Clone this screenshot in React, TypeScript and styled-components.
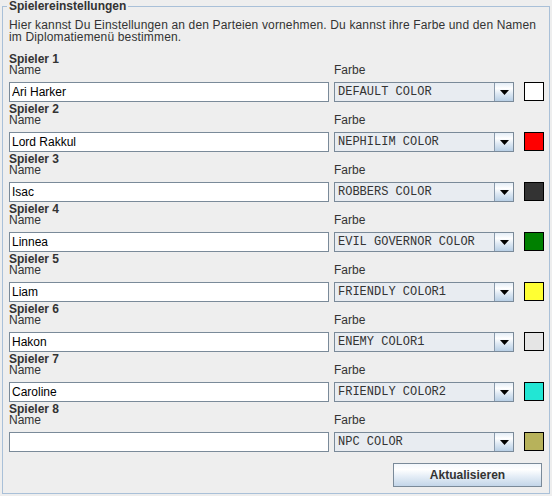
import React from "react";
import styled, { createGlobalStyle } from "styled-components";

const GlobalStyle = createGlobalStyle`
  html, body {
    margin: 0;
    padding: 0;
    background: #eeeeee;
  }
  body {
    font-family: "Liberation Sans", Arial, sans-serif;
    font-size: 12px;
    color: #333333;
  }
  * { box-sizing: border-box; }
`;

const Page = styled.div`
  width: 552px;
  height: 496px;
  padding: 0 2px 2px 2px;
  background: #eeeeee;
`;

const Group = styled.fieldset`
  margin: 0;
  min-width: 0;
  height: 494px;
  border: 1px solid #a9c0d8;
  padding: 7px 5px 6px 6px;
`;

const Title = styled.legend`
  margin-left: -2px;
  padding: 0 2px;
  font-weight: bold;
  font-size: 12px;
  line-height: 12px;
  color: #333333;
`;

const Description = styled.p`
  margin: 0 0 11px 0;
  line-height: 12px;
  letter-spacing: 0.15px;
  color: #333333;
`;

const PlayerBlock = styled.div`
  display: flex;
  flex-direction: column;
  height: 50px;
`;

const PlayerTitle = styled.div`
  font-weight: bold;
  line-height: 11px;
  height: 11px;
`;

const FieldsRow = styled.div`
  display: flex;
  align-items: flex-end;
`;

const FieldColumn = styled.div<{ $width: number; $offset: number }>`
  display: flex;
  flex-direction: column;
  width: ${(p) => p.$width}px;
  margin-left: ${(p) => p.$offset}px;
`;

const FieldLabel = styled.div`
  line-height: 11px;
  height: 11px;
  margin-bottom: 6px;
`;

const TextInput = styled.input`
  height: 20px;
  width: 100%;
  margin: 0;
  padding: 0 2px;
  border: 1px solid #7a8a99;
  background: #ffffff;
  font-family: "Liberation Sans", Arial, sans-serif;
  font-size: 12px;
  color: #000000;
  outline: none;
`;

const Combo = styled.div`
  display: flex;
  height: 20px;
  border: 1px solid #7a8a99;
  background: #e8ecf1;
`;

const ComboValue = styled.div`
  flex: 1;
  padding: 0 3px;
  font-family: "Liberation Mono", "Courier New", monospace;
  font-size: 12px;
  line-height: 18px;
  color: #333333;
  white-space: nowrap;
  overflow: hidden;
`;

const ComboArrow = styled.div`
  width: 19px;
  border-left: 1px solid #8a9aab;
  display: flex;
  align-items: center;
  justify-content: center;
  background: linear-gradient(
    to bottom,
    #e4edf6 0%,
    #ffffff 30%,
    #dde8f3 60%,
    #b8cfe5 100%
  );
`;

const Swatch = styled.div<{ $color: string }>`
  width: 20px;
  height: 19px;
  margin-left: 10px;
  margin-bottom: 1px;
  border: 1px solid #000000;
  background: ${(p) => p.$color};
`;

const Footer = styled.div`
  display: flex;
  justify-content: flex-end;
  margin-top: 9px;
  padding-right: 2px;
`;

const Button = styled.button`
  width: 149px;
  height: 24px;
  margin: 0;
  padding: 0;
  border: 1px solid #7a8a99;
  background: linear-gradient(
    to bottom,
    #f4f8fc 0%,
    #ffffff 25%,
    #e6eef7 55%,
    #c3d6e9 100%
  );
  font-family: "Liberation Sans", Arial, sans-serif;
  font-weight: bold;
  font-size: 12px;
  color: #333333;
`;

const ArrowIcon = () => (
  <svg width="9" height="5" viewBox="0 0 9 5">
    <path d="M0 0 H9 L4.5 5 Z" fill="#000" />
  </svg>
);

const players = [
  { name: "Ari Harker", color: "DEFAULT COLOR", swatch: "#ffffff" },
  { name: "Lord Rakkul", color: "NEPHILIM COLOR", swatch: "#ff0000" },
  { name: "Isac", color: "ROBBERS COLOR", swatch: "#333333" },
  { name: "Linnea", color: "EVIL GOVERNOR COLOR", swatch: "#008000" },
  { name: "Liam", color: "FRIENDLY COLOR1", swatch: "#ffff33" },
  { name: "Hakon", color: "ENEMY COLOR1", swatch: "#e5e5e5" },
  { name: "Caroline", color: "FRIENDLY COLOR2", swatch: "#22e6d4" },
  { name: "", color: "NPC COLOR", swatch: "#b7b25b" },
];

export default function App() {
  return (
    <>
      <GlobalStyle />
      <Page>
        <Group>
          <Title>Spielereinstellungen</Title>
          <Description>
            Hier kannst Du Einstellungen an den Parteien vornehmen. Du kannst ihre Farbe und den Namen
            <br />
            im Diplomatiemenü bestimmen.
          </Description>
          {players.map((p, i) => (
            <PlayerBlock key={i}>
              <PlayerTitle>Spieler {i + 1}</PlayerTitle>
              <FieldsRow>
                <FieldColumn $width={320} $offset={0}>
                  <FieldLabel>Name</FieldLabel>
                  <TextInput defaultValue={p.name} />
                </FieldColumn>
                <FieldColumn $width={180} $offset={5}>
                  <FieldLabel>Farbe</FieldLabel>
                  <Combo>
                    <ComboValue>{p.color}</ComboValue>
                    <ComboArrow>
                      <ArrowIcon />
                    </ComboArrow>
                  </Combo>
                </FieldColumn>
                <Swatch $color={p.swatch} />
              </FieldsRow>
            </PlayerBlock>
          ))}
          <Footer>
            <Button>Aktualisieren</Button>
          </Footer>
        </Group>
      </Page>
    </>
  );
}
